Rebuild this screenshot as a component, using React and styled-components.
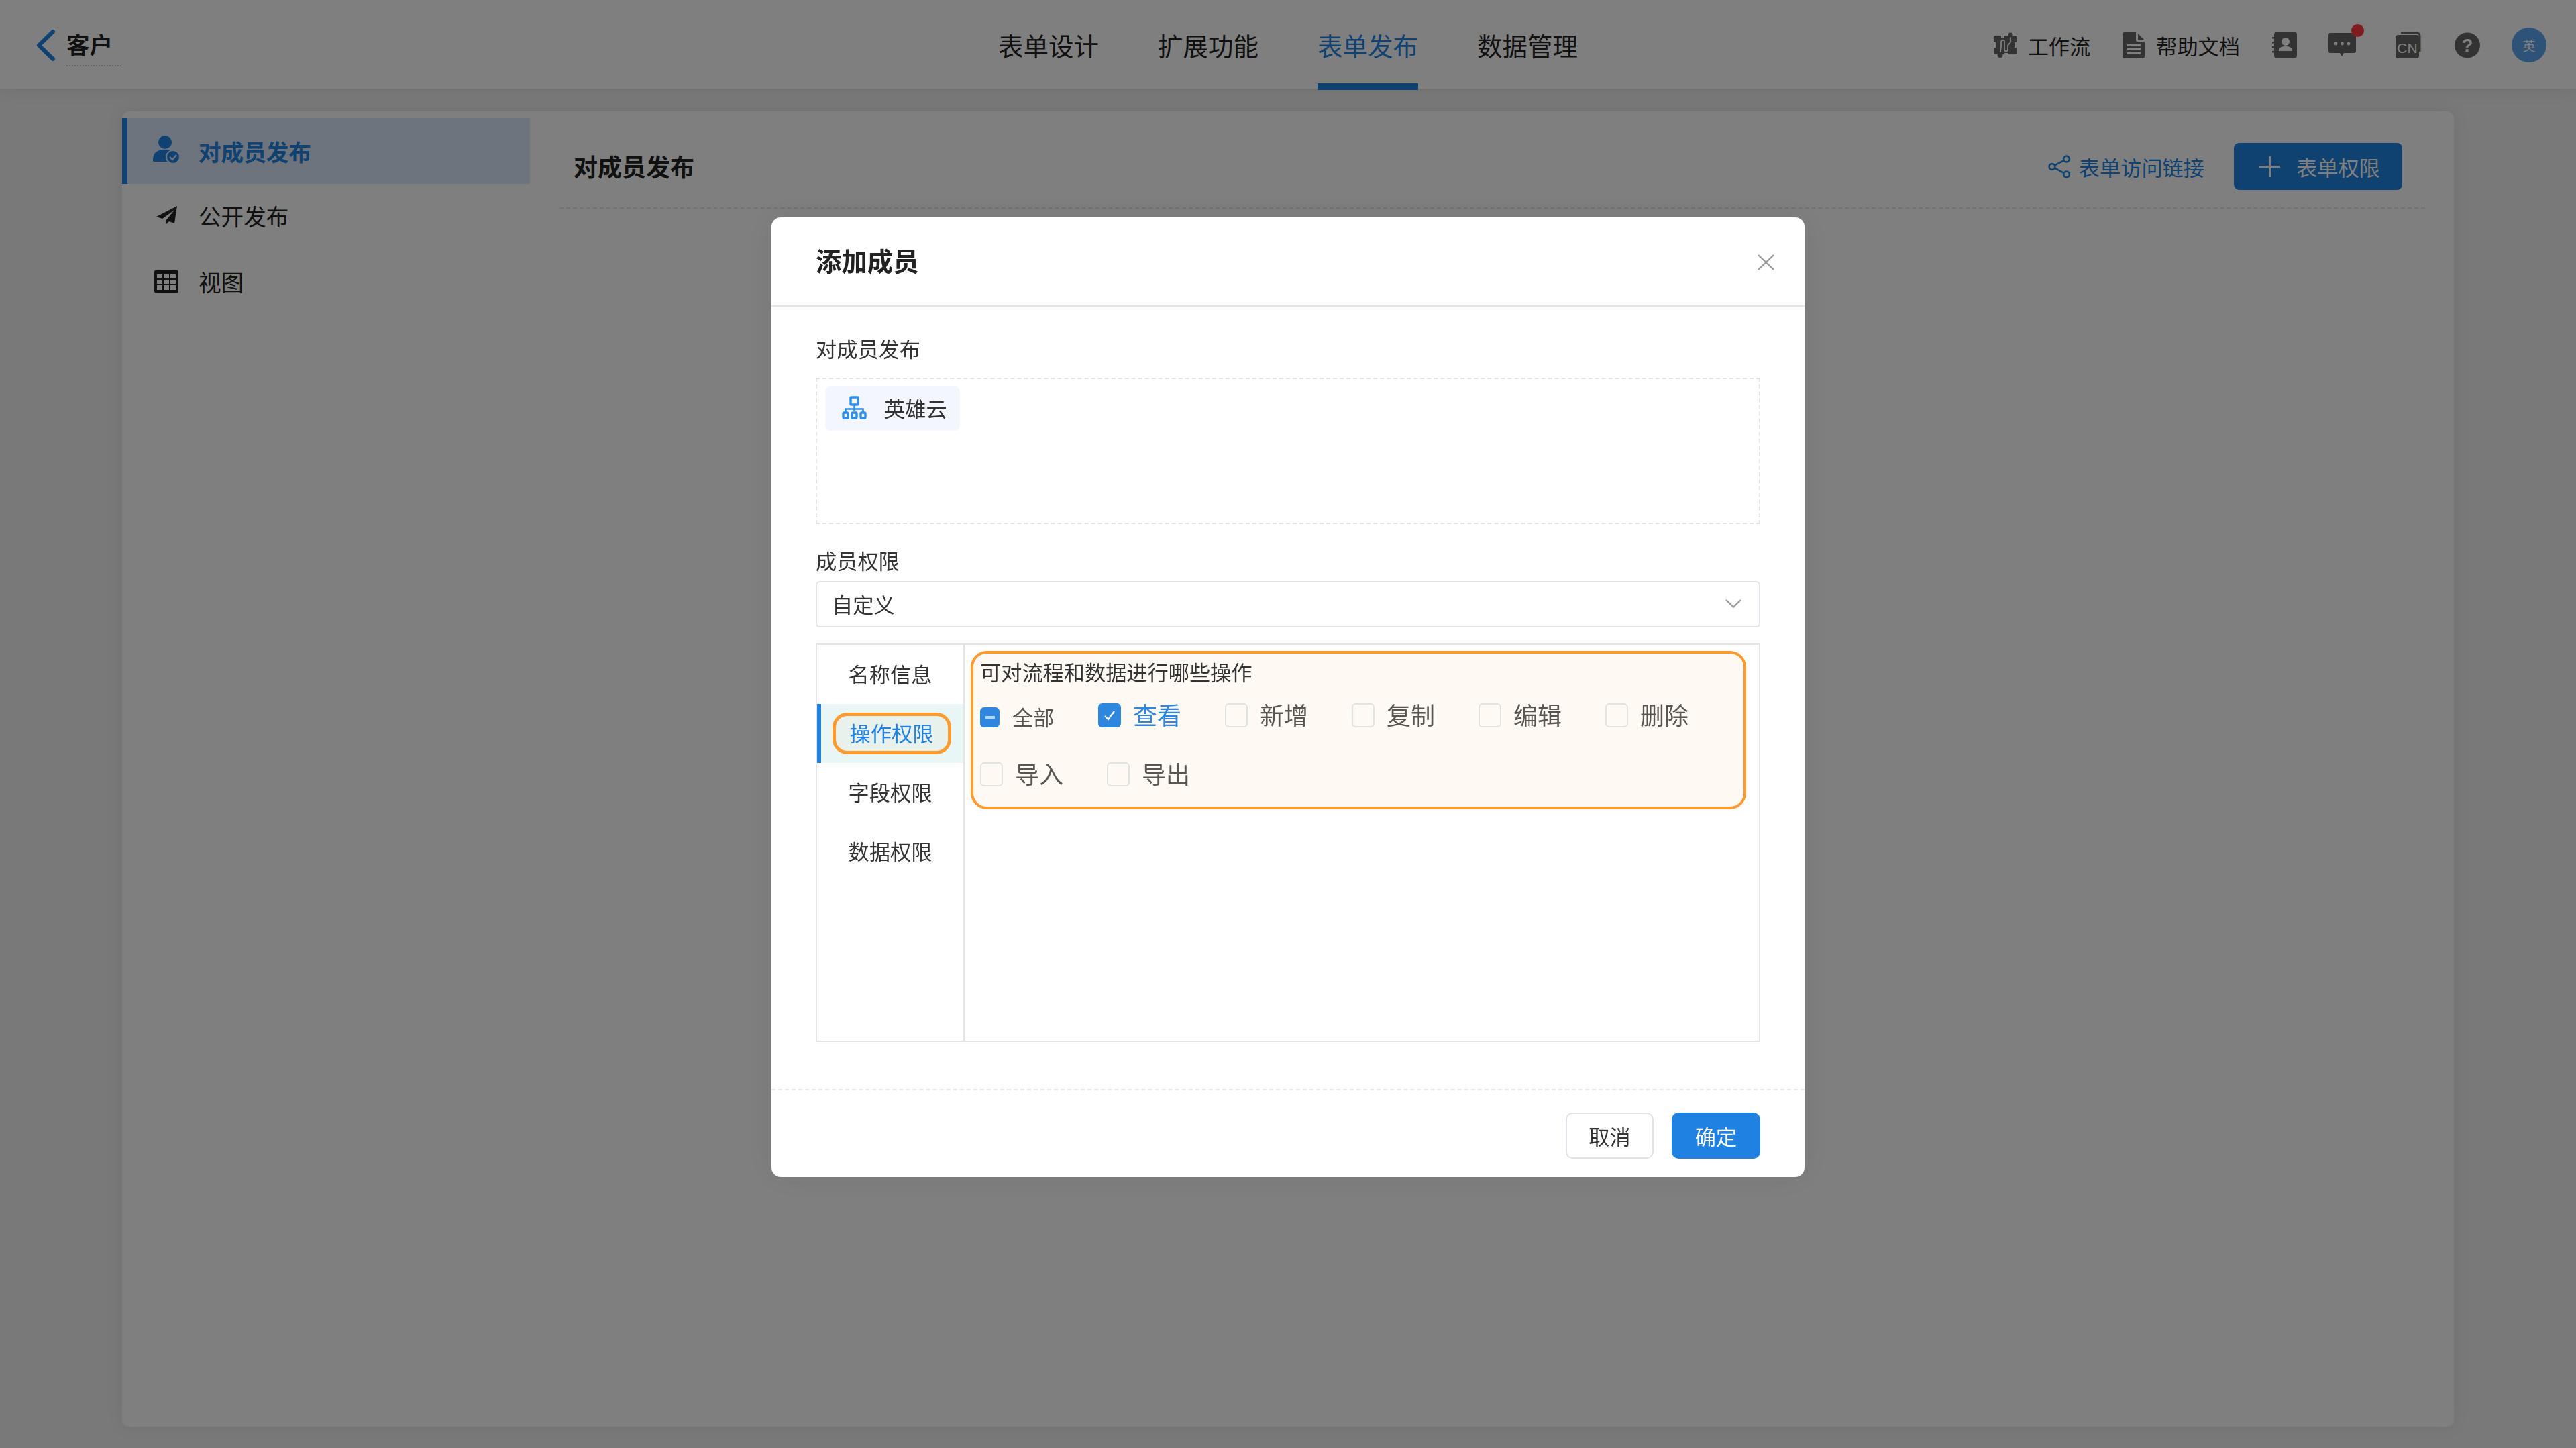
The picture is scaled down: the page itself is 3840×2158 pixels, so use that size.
import React from 'react';
import styled, { createGlobalStyle } from 'styled-components';

const BLUE = '#1f82e3';
const FONT = '"Noto Sans CJK SC", "Noto Sans", sans-serif';

const GlobalStyle = createGlobalStyle`
  * {
    box-sizing: border-box;
  }

  html, body {
    margin: 0;
    padding: 0;
    background: #f2f2f2;
  }

  body {
    font-family: ${FONT};
    font-size: 31.2px;
    color: #222;
  }
`

const Page = styled.div`
  display: flex;
  flex-direction: column;
  width: 3840px;
  height: 2158px;
  overflow: hidden;
`

const Header = styled.header`
  position: relative;
  z-index: 1;
  display: grid;
  grid-template-columns: 1fr auto 1fr;
  flex: none;
  height: 132px;
  background: #fff;
  box-shadow: 0 2px 24px rgba(0, 0, 0, .08);
`

const Brand = styled.div`
  display: flex;
  align-items: center;
  gap: 16px;
  padding-left: 54px;
`

const BrandName = styled.a`
  margin-top: 8px;
  padding-right: 13px;
  padding-bottom: 10px;
  border-bottom: 2px dotted #ccc;
  font-size: 34.5px;
  font-weight: 700;
  line-height: 44px;
  color: #222;
`

const Nav = styled.nav`
  display: flex;
  gap: 88px;
  height: 134px;
`

const Tab = styled.a`
  display: flex;
  align-items: center;
  padding-top: 8px;
  border-bottom: 10px solid ${p => (p.$active ? BLUE : 'transparent')};
  font-size: 37.5px;
  color: ${p => (p.$active ? BLUE : '#222')};
`

const Tools = styled.div`
  display: flex;
  align-items: center;
  justify-content: flex-end;
  padding-right: 44px;
`

const ToolLink = styled.a`
  display: flex;
  align-items: center;
  gap: 17px;
  margin-right: ${p => p.$after}px;
  color: #222;
`

const ToolIcon = styled.span`
  display: flex;
  margin-right: ${p => p.$after}px;
`

const BellWrap = styled(ToolIcon)`
  position: relative;
`

const Dot = styled.i`
  position: absolute;
  top: -13px;
  right: -12px;
  width: 19px;
  height: 19px;
  border-radius: 50%;
  background: #fc383f;
`

const Avatar = styled.span`
  display: flex;
  align-items: center;
  justify-content: center;
  width: 52px;
  height: 52px;
  border-radius: 50%;
  background: #5ea4f0;
  font-size: 19px;
  color: #fff;
`

const Main = styled.main`
  flex: 1;
  min-height: 0;
  padding: 34px 182px 32px;
`

const Card = styled.section`
  display: flex;
  height: 100%;
  border-radius: 10px;
  background: #fff;
  box-shadow: 0 0 24px rgba(0, 0, 0, .08);
`

const Sidebar = styled.aside`
  flex: none;
  width: 608px;
  padding-top: 10px;
`

const SideItem = styled.a`
  display: flex;
  align-items: center;
  height: 98px;
  margin-bottom: ${p => (p.$active ? -2 : 0)}px;
  padding-left: ${p => (p.$active ? 38 : 46)}px;
  border-left: ${p => (p.$active ? `8px solid ${BLUE}` : 'none')};
  background: ${p => (p.$active ? '#dce8fc' : 'transparent')};
  font-size: 33.6px;
  font-weight: ${p => (p.$active ? 700 : 400)};
  color: ${p => (p.$active ? BLUE : '#222')};
`

const SideIconBox = styled.span`
  display: flex;
  justify-content: center;
  flex: none;
  width: 40px;
  margin-right: 28px;
  margin-top: ${p => (p.$up ? -4 : 0)}px;
`

const Content = styled.div`
  flex: 1;
  min-width: 0;
  padding: 0 43px 0 44px;
`

const ContentHead = styled.div`
  display: flex;
  align-items: center;
  justify-content: space-between;
  height: 145px;
  padding: 21px 34px 0 21px;
  border-bottom: 2px dashed #e4e4e4;
`

const ContentTitle = styled.h2`
  margin: 0 0 2px;
  font-size: 36px;
  font-weight: 700;
  color: #222;
`

const HeadActions = styled.div`
  display: flex;
  align-items: center;
  gap: 44px;
`

const ShareLink = styled.a`
  display: flex;
  align-items: center;
  gap: 11px;
  color: ${BLUE};
`

const AddButton = styled.button`
  display: flex;
  align-items: center;
  gap: 24px;
  width: 251px;
  height: 70px;
  padding: 0 0 0 38px;
  border: none;
  border-radius: 8px;
  background: ${BLUE};
  font-family: inherit;
  font-size: 31.2px;
  color: #fff;
`

const Overlay = styled.div`
  position: fixed;
  inset: 0;
  z-index: 10;
  display: flex;
  justify-content: center;
  padding-top: 324px;
  background: rgba(0, 0, 0, .5);
`

const Modal = styled.div`
  display: flex;
  flex-direction: column;
  width: 1540px;
  height: 1430px;
  border-radius: 14px;
  background: #fff;
  box-shadow: 0 0 48px rgba(0, 0, 0, .08);
`

const ModalHead = styled.div`
  display: flex;
  align-items: center;
  justify-content: space-between;
  flex: none;
  height: 133px;
  padding: 0 45px 0 66px;
  border-bottom: 2px solid #e5e5e5;
`

const ModalTitle = styled.h3`
  margin: 0 0 6px;
  font-size: 38.4px;
  font-weight: 700;
  color: #222;
`

const CloseButton = styled.span`
  display: flex;
  margin-top: 3px;
`

const ModalBody = styled.div`
  flex: 1;
  padding: 40px 66px 0;
`

const FieldLabel = styled.div`
  margin-top: ${p => p.$top || 0}px;
  font-size: 31.2px;
  line-height: 44px;
  color: #333;
`

const MemberBox = styled.div`
  display: flex;
  align-items: flex-start;
  height: 218px;
  margin-top: 22px;
  padding: 11px 12px;
  border: 2px dashed #e2e2e2;
`

const MemberTag = styled.div`
  display: flex;
  align-items: center;
  gap: 26px;
  width: 201px;
  height: 66px;
  padding: 0 0 3px 25px;
  border-radius: 8px;
  background: #f3f6fd;
  color: #333;
`

const Select = styled.div`
  display: flex;
  align-items: center;
  justify-content: space-between;
  height: 69px;
  margin-top: 9px;
  padding: 0 26px 2px 22px;
  border: 2px solid #dfe3e8;
  border-radius: 6px;
  color: #333;
`

const Panel = styled.div`
  display: flex;
  height: 594px;
  margin-top: 24px;
  border: 2px solid #e6e6e6;
`

const PanelTabs = styled.div`
  flex: none;
  width: 220px;
  border-right: 2px solid #e6e6e6;
`

const PanelTab = styled.a`
  display: flex;
  align-items: center;
  justify-content: center;
  height: 88px;
  padding-bottom: ${p => (p.$active ? 0 : 4)}px;
  color: ${p => (p.$active ? BLUE : '#333')};
  background: ${p => (p.$active ? '#e8f6f5' : 'transparent')};
  border-left: ${p => (p.$active ? `6px solid ${BLUE}` : 'none')};
`

const Highlight = styled.span`
  display: flex;
  align-items: center;
  justify-content: center;
  width: 177px;
  height: 62px;
  margin-right: 2px;
  padding-bottom: 3px;
  border: 5px solid #ff9a2e;
  border-radius: 22px;
  background: #e9f1ed;
`

const PanelBody = styled.div`
  flex: 1;
  padding: 9px 19px 0 9px;
`

const OperationBox = styled.div`
  height: 236px;
  padding: 10px 0 0 10px;
  border: 4px solid #ff9a2e;
  border-radius: 24px;
  background: #fef9f3;
`

const OperationTitle = styled.div`
  margin: -2px 0 2px;
  line-height: 38px;
  color: #333;
`

const OperationList = styled.div`
  display: flex;
  flex-wrap: wrap;
`

const Operation = styled.label`
  display: flex;
  align-items: center;
  gap: ${p => (p.$small ? 19 : 18)}px;
  width: ${p => (p.$small ? 176 : 189)}px;
  height: 88px;
  font-size: ${p => (p.$small ? 31.2 : 36)}px;
  color: ${p => (p.$checked ? '#2e86de' : '#5a5550')};
`

const OperationText = styled.span`
  margin-top: ${p => (p.$small ? 3 : -5)}px;
`

const CheckBox = styled.span`
  display: flex;
  align-items: center;
  justify-content: center;
  flex: none;
  width: ${p => (p.$small ? 29 : 34)}px;
  height: ${p => (p.$small ? 30 : 36)}px;
  margin-top: ${p => (p.$small ? 6 : 0)}px;
  border: ${p => (p.$on ? 'none' : '2px solid #e2e2e0')};
  border-radius: 6px;
  background: ${p => (p.$on ? '#2e86de' : 'transparent')};
`

const Dash = styled.i`
  width: 14px;
  height: 4px;
  background: #b5d6f5;
`

const ModalFoot = styled.div`
  display: flex;
  justify-content: flex-end;
  gap: 27px;
  flex: none;
  height: 131px;
  padding: 33px 66px 0 0;
  border-top: 2px dashed #e8e8e8;
`

const FootButton = styled.button`
  width: ${p => (p.$primary ? 132 : 131)}px;
  height: 69px;
  padding: 0;
  border: ${p => (p.$primary ? 'none' : '2px solid #dfe3e8')};
  border-radius: 10px;
  background: ${p => (p.$primary ? BLUE : '#fff')};
  font-family: inherit;
  font-size: 31.2px;
  color: ${p => (p.$primary ? '#fff' : '#333')};
`

const BackIcon = () => (
  <svg width="29" height="47" viewBox="0 0 29 47" fill="none">
    <path d="M25 3 L4 23.5 L25 44" stroke={BLUE} strokeWidth="6" strokeLinecap="round" strokeLinejoin="round" />
  </svg>
)

const WorkflowIcon = () => (
  <svg width="34" height="38" viewBox="0 0 34 38">
    <path fill="#666" d="M3 5h8v3h4V5h17a2 2 0 0 1 2 2v8h-3v8h3v8a2 2 0 0 1-2 2H22v-2h-6v2H3a3 3 0 0 1-3-3v-7h3v-8H0V8a3 3 0 0 1 3-3z" />
    <path fill="none" stroke="#fff" strokeWidth="1.8" d="M25 6v8c0 3-4 3-4 7v5c0 3-5 3-5 0V14c0-3-4-3-5 0v7c0 3-1 5-1 9" />
    <circle cx="25" cy="4" r="3.6" fill="#666" />
    <circle cx="9.5" cy="34" r="4" fill="#666" />
  </svg>
)

const DocIcon = () => (
  <svg width="33" height="39" viewBox="0 0 33 39">
    <path fill="#666" d="M3 0h17v12a2 2 0 0 0 2 2h11v22a3 3 0 0 1-3 3H3a3 3 0 0 1-3-3V3a3 3 0 0 1 3-3z" />
    <path fill="#666" d="M23 2l9 9h-9z" />
    <path fill="#fff" d="M6 18h21v3H6zM6 24h21v3H6zM6 30h21v3H6z" />
  </svg>
)

const ContactIcon = () => (
  <svg width="37" height="38" viewBox="0 0 37 38">
    <rect x="3" y="0" width="34" height="38" rx="3" fill="#666" />
    <path fill="#666" d="M0 7h4v2.5H0zM0 14h4v2.5H0zM0 21h4v2.5H0zM0 28h4v2.5H0z" />
    <circle cx="20" cy="14" r="6" fill="#fff" />
    <path fill="#fff" d="M10 28c0-6 5-7 10-7s10 1 10 7z" />
  </svg>
)

const MessageIcon = () => (
  <svg width="41" height="36" viewBox="0 0 41 36">
    <path fill="#666" d="M3 0h35a3 3 0 0 1 3 3v24a3 3 0 0 1-3 3H23l-3 5-3-5H3a3 3 0 0 1-3-3V3a3 3 0 0 1 3-3z" />
    <circle cx="11" cy="16" r="2.4" fill="#fff" />
    <circle cx="20.5" cy="16" r="2.4" fill="#fff" />
    <circle cx="30" cy="16" r="2.4" fill="#fff" />
  </svg>
)

const LangIcon = () => (
  <svg width="38" height="40" viewBox="0 0 38 40">
    <path fill="none" stroke="#666" strokeWidth="3" d="M8 2h24a4 4 0 0 1 4 4v24" />
    <rect x="0" y="5" width="35" height="35" rx="4" fill="#666" />
    <text x="17.5" y="32" textAnchor="middle" fontFamily="Liberation Sans, sans-serif" fontSize="21" fill="#fff">CN</text>
  </svg>
)

const HelpIcon = () => (
  <svg width="38" height="39" viewBox="0 0 38 39">
    <circle cx="19" cy="19.5" r="19" fill="#666" />
    <text x="19" y="29" textAnchor="middle" fontFamily="Liberation Sans, sans-serif" fontWeight="700" fontSize="27" fill="#fff">?</text>
  </svg>
)

const PersonIcon = () => (
  <svg width="40" height="42" viewBox="0 0 40 42">
    <circle cx="18" cy="10" r="10" fill={BLUE} />
    <path fill={BLUE} d="M0 36c0-10 6-15 18-15s18 5 18 15v3H2a2 2 0 0 1-2-2z" />
    <circle cx="30" cy="32" r="10" fill={BLUE} stroke="#dce8fc" strokeWidth="2" />
    <path fill="none" stroke="#dce8fc" strokeWidth="2.4" d="M25 32l4 4 6-7" />
  </svg>
)

const PlaneIcon = () => (
  <svg width="31" height="28" viewBox="0 0 31 28">
    <path fill="#222" d="M31 0L0 16l9 3L27 6 14 22v6l5-5 8 3z" />
  </svg>
)

const GridIcon = () => (
  <svg width="36" height="35" viewBox="0 0 36 35">
    <rect width="36" height="35" rx="4" fill="#222" />
    <path fill="#fff" d="M4 7h8v6H4zM14 7h8v6h-8zM24 7h8v6h-8zM4 15h8v6H4zM14 15h8v6h-8zM24 15h8v6h-8zM4 23h8v7H4zM14 23h8v7h-8zM24 23h8v7h-8z" />
  </svg>
)

const OrgIcon = () => (
  <svg width="37" height="35" viewBox="0 0 37 35" fill="none" stroke="#2e8eea" strokeWidth="3.4">
    <rect x="13" y="2" width="11" height="11" rx="1" />
    <path strokeWidth="2.6" d="M18.5 13v9M5.5 24v-4.5h26V24" />
    <rect x="2" y="25" width="7" height="8" rx="1.5" />
    <rect x="15" y="25" width="7" height="8" rx="1.5" />
    <rect x="28" y="25" width="7" height="8" rx="1.5" />
  </svg>
)

const ShareIcon = () => (
  <svg width="35" height="35" viewBox="0 0 35 35" fill="none" stroke={BLUE} strokeWidth="2.6">
    <circle cx="27.5" cy="6" r="4.4" />
    <circle cx="6" cy="17.5" r="4.4" />
    <circle cx="27.5" cy="29" r="4.4" />
    <path d="M10 15.4l13.6-7.3M10 19.6l13.6 7.3" />
  </svg>
)

const PlusIcon = () => (
  <svg width="31" height="31" viewBox="0 0 31 31" stroke="#fff" strokeWidth="3">
    <path d="M15.5 0v31M0 15.5h31" />
  </svg>
)

const CloseIcon = () => (
  <svg width="25" height="24" viewBox="0 0 25 24" fill="none" stroke="#999" strokeWidth="2.4">
    <path d="M1 1l23 22M24 1L1 23" />
  </svg>
)

const ChevronIcon = () => (
  <svg width="24" height="13" viewBox="0 0 24 13" fill="none" stroke="#999" strokeWidth="2.4">
    <path d="M1 1l11 10.5L23 1" />
  </svg>
)

const TickIcon = () => (
  <svg width="18" height="16" viewBox="0 0 18 16" fill="none" stroke="#fff" strokeWidth="2.2">
    <path d="M2 9l5 5L16 2" />
  </svg>
)

const tabs = ['表单设计', '扩展功能', '表单发布', '数据管理'];
const panelTabs = ['名称信息', '操作权限', '字段权限', '数据权限'];
const operations = ['新增', '复制', '编辑', '删除', '导入', '导出'];

export default function App() {
  return (
    <>
      <GlobalStyle />
      <Page>
        <Header>
          <Brand>
            <BackIcon />
            <BrandName>客户</BrandName>
          </Brand>
          <Nav>
            {tabs.map(tab => (
              <Tab key={tab} $active={tab === '表单发布'}>{tab}</Tab>
            ))}
          </Nav>
          <Tools>
            <ToolLink $after={48}><WorkflowIcon />工作流</ToolLink>
            <ToolLink $after={48}><DocIcon />帮助文档</ToolLink>
            <ToolIcon $after={47}><ContactIcon /></ToolIcon>
            <BellWrap $after={59}><MessageIcon /><Dot /></BellWrap>
            <ToolIcon $after={50}><LangIcon /></ToolIcon>
            <ToolIcon $after={47}><HelpIcon /></ToolIcon>
            <Avatar>英</Avatar>
          </Tools>
        </Header>

        <Main>
          <Card>
            <Sidebar>
              <SideItem $active><SideIconBox $up><PersonIcon /></SideIconBox>对成员发布</SideItem>
              <SideItem><SideIconBox><PlaneIcon /></SideIconBox>公开发布</SideItem>
              <SideItem><SideIconBox><GridIcon /></SideIconBox>视图</SideItem>
            </Sidebar>
            <Content>
              <ContentHead>
                <ContentTitle>对成员发布</ContentTitle>
                <HeadActions>
                  <ShareLink><ShareIcon />表单访问链接</ShareLink>
                  <AddButton><PlusIcon />表单权限</AddButton>
                </HeadActions>
              </ContentHead>
            </Content>
          </Card>
        </Main>
      </Page>

      <Overlay>
        <Modal>
          <ModalHead>
            <ModalTitle>添加成员</ModalTitle>
            <CloseButton><CloseIcon /></CloseButton>
          </ModalHead>
          <ModalBody>
            <FieldLabel>对成员发布</FieldLabel>
            <MemberBox>
              <MemberTag><OrgIcon />英雄云</MemberTag>
            </MemberBox>
            <FieldLabel $top={32}>成员权限</FieldLabel>
            <Select>
              自定义
              <ChevronIcon />
            </Select>
            <Panel>
              <PanelTabs>
                {panelTabs.map(tab => (
                  tab === '操作权限'
                    ? <PanelTab key={tab} $active><Highlight>{tab}</Highlight></PanelTab>
                    : <PanelTab key={tab}>{tab}</PanelTab>
                ))}
              </PanelTabs>
              <PanelBody>
                <OperationBox>
                  <OperationTitle>可对流程和数据进行哪些操作</OperationTitle>
                  <OperationList>
                    <Operation $small>
                      <CheckBox $small $on><Dash /></CheckBox>
                      <OperationText $small>全部</OperationText>
                    </Operation>
                    <Operation $checked>
                      <CheckBox $on><TickIcon /></CheckBox>
                      <OperationText>查看</OperationText>
                    </Operation>
                    {operations.map(name => (
                      <Operation key={name}>
                        <CheckBox />
                        <OperationText>{name}</OperationText>
                      </Operation>
                    ))}
                  </OperationList>
                </OperationBox>
              </PanelBody>
            </Panel>
          </ModalBody>
          <ModalFoot>
            <FootButton>取消</FootButton>
            <FootButton $primary>确定</FootButton>
          </ModalFoot>
        </Modal>
      </Overlay>
    </>
  );
}
